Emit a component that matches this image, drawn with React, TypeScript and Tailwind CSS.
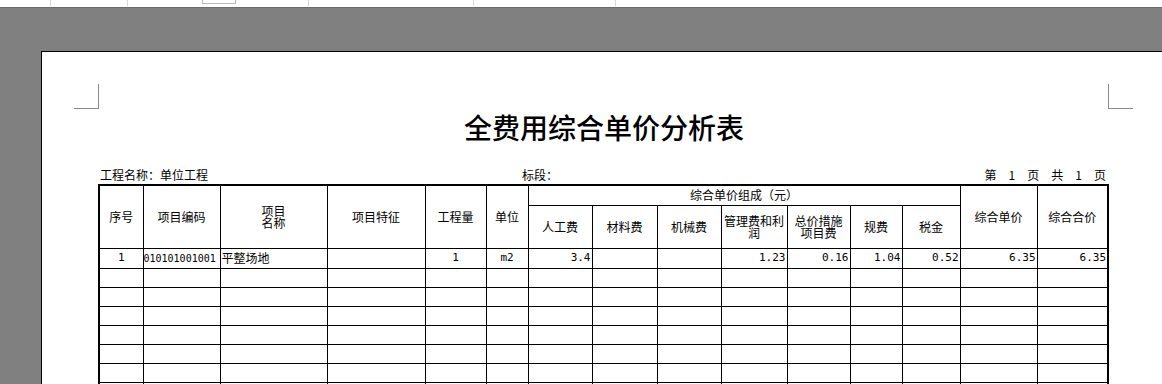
const cjk = { fontFamily: '"Noto Sans CJK SC", sans-serif' };

type Row = {
  no?: string;
  code?: string;
  name?: string;
  qty?: string;
  unit?: string;
  labor?: string;
  material?: string;
  machine?: string;
  mgmt?: string;
  measure?: string;
  fee?: string;
  tax?: string;
  price?: string;
  total?: string;
};

const rows: Row[] = [
  {
    no: '1',
    code: '010101001001',
    name: '平整场地',
    qty: '1',
    unit: 'm2',
    labor: '3.4',
    mgmt: '1.23',
    measure: '0.16',
    fee: '1.04',
    tax: '0.52',
    price: '6.35',
    total: '6.35',
  },
  {},
  {},
  {},
  {},
  {},
  {},
  {},
];

const colWidths = [44, 77, 107, 98, 61, 42, 64, 65, 64, 66, 63, 52, 58, 77, 71];

const th = 'border border-black font-normal text-[12px] text-black text-center align-middle p-0';
const td = 'border border-black p-0 h-[19px] text-black align-middle whitespace-nowrap';
const monoFont = 'font-["DejaVu_Sans_Mono",monospace]';
const num = `text-right pr-[1px] ${monoFont} text-[11px]`;

function Stack({ lines }: { lines: string[] }) {
  return (
    <div className="flex flex-col items-center">
      {lines.map((l) => (
        <div key={l} className="h-[12px] leading-[12px]">
          {l}
        </div>
      ))}
    </div>
  );
}

export default function App() {
  return (
    <div className="w-[1162px] h-[384px] overflow-hidden bg-[#808080] flex flex-col" style={cjk}>
      {/* top ruler strip */}
      <div className="h-[8px] bg-white border-b border-[#6b6b6b] flex items-start shrink-0">
        <div className="w-[50px]" />
        <div className="w-px h-[6px] bg-[#d8d8d8]" />
        <div className="w-[76px]" />
        <div className="w-px h-[6px] bg-[#d8d8d8]" />
        <div className="w-[74px]" />
        <div className="w-[34px] h-[4px] border border-t-0 border-[#b8b8b8]" />
        <div className="w-[72px]" />
        <div className="w-px h-[6px] bg-[#d8d8d8]" />
        <div className="w-[164px]" />
        <div className="w-px h-[6px] bg-[#d8d8d8]" />
        <div className="w-[141px]" />
        <div className="w-px h-[6px] bg-[#d8d8d8]" />
      </div>

      {/* gray band */}
      <div className="h-[43px] shrink-0" />

      {/* page */}
      <div className="ml-[41px] flex-1 bg-white border-l border-t border-black pl-[32px] pt-[32px]">
        {/* crop marks */}
        <div className="w-[1059px] flex justify-between">
          <div className="w-[25px] h-[25px] border-r border-b border-[#8a8a8a]" />
          <div className="w-[25px] h-[25px] border-l border-b border-[#8a8a8a]" />
        </div>

        <div className="ml-[25px] w-[1010px]">
          <h1 className="mt-[4px] text-center text-[28px] leading-[28px] font-medium text-black">
            全费用综合单价分析表
          </h1>

          <div className="mt-[25px] h-[17px] flex items-center text-[12px] leading-[16px] text-black">
            <div className="w-[423px] pl-[1px]">工程名称：单位工程</div>
            <div className="flex-1">标段：</div>
            <div className="flex gap-[12px] pr-[3px]">
              <span>第</span>
              <span>1</span>
              <span>页</span>
              <span>共</span>
              <span>1</span>
              <span>页</span>
            </div>
          </div>

          <table className="mt-[1px] -ml-px w-[1009px] table-fixed border-collapse border-2 border-black">
            <colgroup>
              {colWidths.map((w, i) => (
                <col key={i} style={{ width: w }} />
              ))}
            </colgroup>
            <thead>
              <tr className="h-[20px]">
                <th rowSpan={2} className={th}>序号</th>
                <th rowSpan={2} className={th}>项目编码</th>
                <th rowSpan={2} className={th}>
                  <Stack lines={['项目', '名称']} />
                </th>
                <th rowSpan={2} className={th}>项目特征</th>
                <th rowSpan={2} className={th}>工程量</th>
                <th rowSpan={2} className={th}>单位</th>
                <th colSpan={7} className={th}>综合单价组成（元）</th>
                <th rowSpan={2} className={th}>综合单价</th>
                <th rowSpan={2} className={th}>综合合价</th>
              </tr>
              <tr className="h-[43px]">
                <th className={th}>人工费</th>
                <th className={th}>材料费</th>
                <th className={th}>机械费</th>
                <th className={th}>
                  <Stack lines={['管理费和利', '润']} />
                </th>
                <th className={th}>
                  <Stack lines={['总价措施', '项目费']} />
                </th>
                <th className={th}>规费</th>
                <th className={th}>税金</th>
              </tr>
            </thead>
            <tbody>
              {rows.map((r, i) => (
                <tr key={i} className={i === 0 ? 'h-[20px]' : 'h-[19px]'}>
                  <td className={`${td} text-center ${monoFont} text-[11px]`}>{r.no}</td>
                  <td className={`${td} ${monoFont} text-[10px]`}>{r.code}</td>
                  <td className={`${td} text-[12px] pl-[1px]`}>{r.name}</td>
                  <td className={td}></td>
                  <td className={`${td} text-center ${monoFont} text-[11px]`}>{r.qty}</td>
                  <td className={`${td} text-center ${monoFont} text-[11px]`}>{r.unit}</td>
                  <td className={`${td} ${num}`}>{r.labor}</td>
                  <td className={`${td} ${num}`}>{r.material}</td>
                  <td className={`${td} ${num}`}>{r.machine}</td>
                  <td className={`${td} ${num}`}>{r.mgmt}</td>
                  <td className={`${td} ${num}`}>{r.measure}</td>
                  <td className={`${td} ${num}`}>{r.fee}</td>
                  <td className={`${td} ${num}`}>{r.tax}</td>
                  <td className={`${td} ${num}`}>{r.price}</td>
                  <td className={`${td} ${num}`}>{r.total}</td>
                </tr>
              ))}
            </tbody>
          </table>
        </div>
      </div>
    </div>
  );
}
